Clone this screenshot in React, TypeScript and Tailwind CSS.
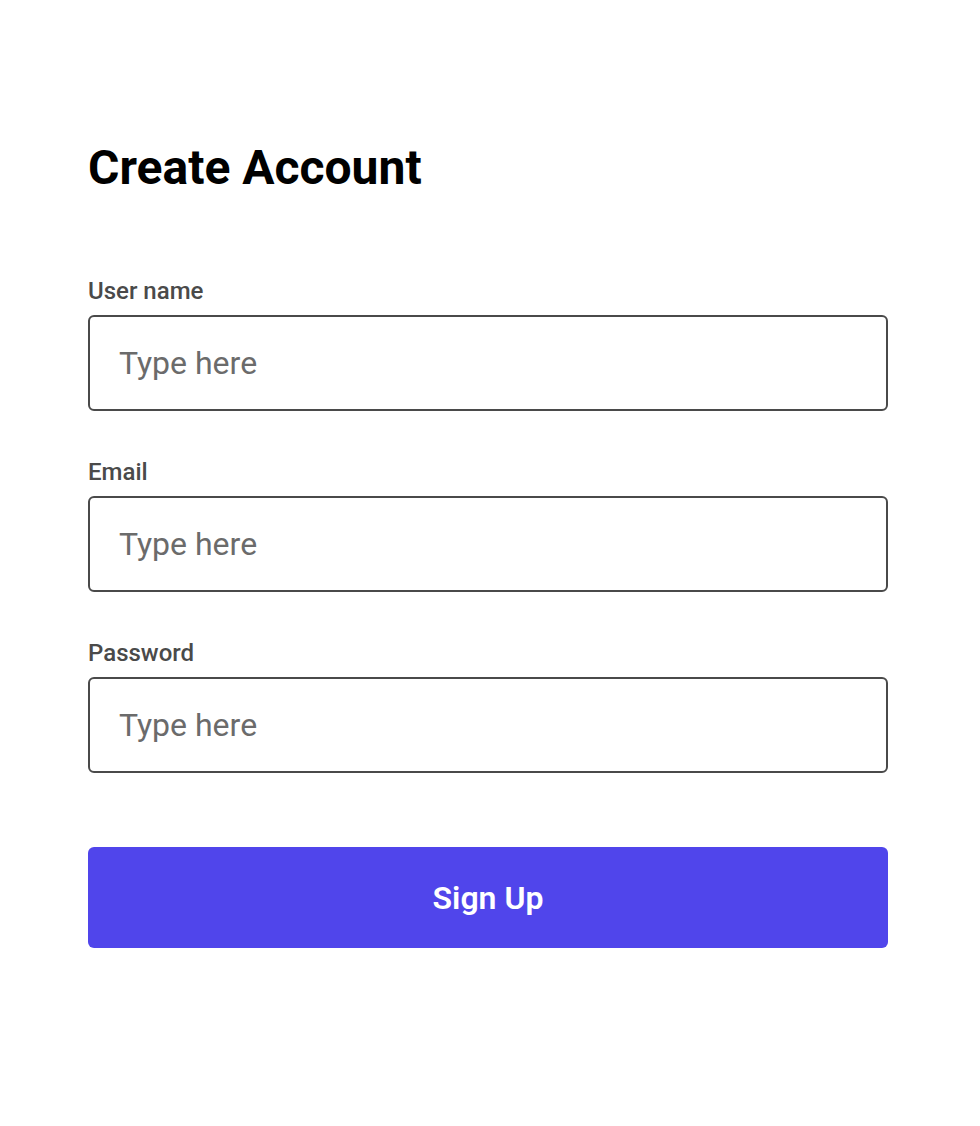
export default function App() {
  const fields = ["User name", "Email", "Password"];

  return (
    <div className="min-h-[1126px] bg-white px-[88px] pt-[138px] font-['Roboto',sans-serif]">
      <div className="w-[800px]">
        <h1 className="text-[48px] font-bold leading-[60px] text-black">
          Create Account
        </h1>

        <form className="mt-[78px] flex flex-col gap-[46px]">
          {fields.map((label) => (
            <div key={label} className="flex flex-col gap-[9px]">
              <label className="text-[24px] font-medium leading-[30px] text-[#4a4a4a]">
                {label}
              </label>
              <input
                type={label === "Password" ? "password" : "text"}
                placeholder="Type here"
                className="h-[96px] rounded-[6px] border-2 border-[#4a4a4a] px-[29px] text-[32px] text-[#333] outline-none placeholder:text-[#6b6b6b]"
              />
            </div>
          ))}

          <button
            type="button"
            className="mt-[28px] h-[101px] rounded-[6px] bg-[#5045eb] text-[32px] font-semibold text-white"
          >
            Sign Up
          </button>
        </form>
      </div>
    </div>
  );
}
